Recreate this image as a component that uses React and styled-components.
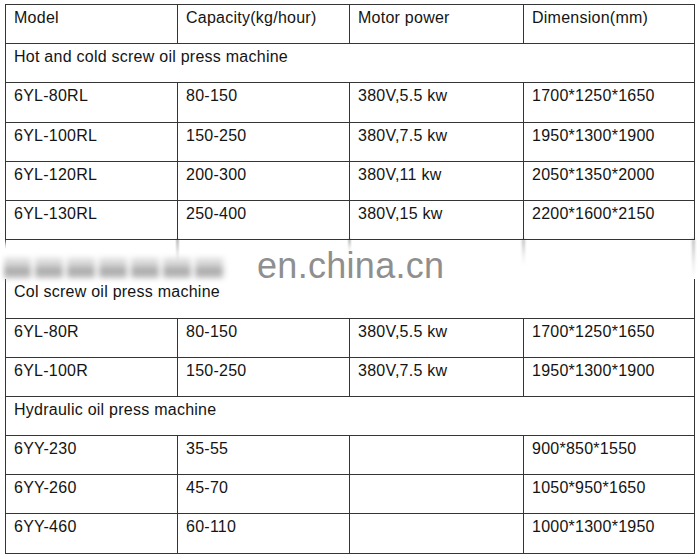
import React from "react";
import styled, { createGlobalStyle } from "styled-components";

const GlobalStyle = createGlobalStyle`
  html, body {
    margin: 0;
    padding: 0;
    background: #fff;
  }
`;

const rows = [
  { section: "Hot and cold screw oil press machine" },
  { cells: ["6YL-80RL", "80-150", "380V,5.5 kw", "1700*1250*1650"] },
  { cells: ["6YL-100RL", "150-250", "380V,7.5 kw", "1950*1300*1900"] },
  { cells: ["6YL-120RL", "200-300", "380V,11 kw", "2050*1350*2000"] },
  { cells: ["6YL-130RL", "250-400", "380V,15 kw", "2200*1600*2150"] },
  { blank: true },
  { section: "Col screw oil press machine" },
  { cells: ["6YL-80R", "80-150", "380V,5.5 kw", "1700*1250*1650"] },
  { cells: ["6YL-100R", "150-250", "380V,7.5 kw", "1950*1300*1900"] },
  { section: "Hydraulic oil press machine" },
  { cells: ["6YY-230", "35-55", "", "900*850*1550"] },
  { cells: ["6YY-260", "45-70", "", "1050*950*1650"] },
  { cells: ["6YY-460", "60-110", "", "1000*1300*1950"] },
];

const Page = styled.div`
  position: relative;
  padding: 4px 0 0 5px;
  width: 700px;
  height: 559px;
  box-sizing: border-box;
  overflow: hidden;
`;

const Table = styled.table`
  border-collapse: collapse;
  table-layout: fixed;
  width: 689px;
  font-family: "Liberation Sans", Arial, sans-serif;
  font-size: 16px;
  letter-spacing: 0.25px;
  color: #141414;
`;

const Row = styled.tr`
  height: 39.2px;
`;

const Cell = styled.td`
  border: 1px solid #353535;
  padding: 4px 8px 0 8px;
  line-height: 18px;
  vertical-align: top;
  white-space: nowrap;
  overflow: hidden;
  box-sizing: border-box;
`;

const BlankCell = styled(Cell)`
  border-bottom-style: hidden;
  border-left-style: ${(p) => (p.$edge === "left" ? "hidden" : "solid")};
  border-right-style: hidden;
`;

const Watermark = styled.div`
  position: absolute;
  left: 0;
  top: 239px;
  width: 700px;
  height: 42px;
  pointer-events: none;
`;

const Smudge = styled.div`
  position: absolute;
  left: 4px;
  top: 18px;
  width: 222px;
  height: 22px;
  background:
    repeating-linear-gradient(
      90deg,
      rgba(255, 255, 255, 0) 0 26px,
      rgba(255, 255, 255, 0.7) 26px 32px
    ),
    linear-gradient(
      180deg,
      rgba(215, 215, 215, 0.5) 0%,
      rgba(190, 190, 190, 0.7) 35%,
      rgba(150, 150, 150, 0.85) 65%,
      rgba(190, 190, 190, 0.6) 100%
    );
  filter: blur(2.5px);
`;

const Brand = styled.div`
  position: absolute;
  left: 257px;
  top: 7px;
  font-family: "Liberation Sans", Arial, sans-serif;
  font-size: 36px;
  line-height: 40px;
  letter-spacing: 0.3px;
  color: #8f8f8f;
`;

const Stub = styled.div`
  position: absolute;
  top: 0;
  left: ${(p) => p.$x}px;
  width: 1px;
  height: ${(p) => p.$h}px;
  background: linear-gradient(180deg, #353535 0%, rgba(120, 120, 120, 0.4) 60%, rgba(200, 200, 200, 0) 100%);
  filter: blur(${(p) => p.$blur}px);
`;

export default function App() {
  return (
    <Page>
      <GlobalStyle />
      <Table>
        <colgroup>
          <col style={{ width: 172 }} />
          <col style={{ width: 172 }} />
          <col style={{ width: 174 }} />
          <col style={{ width: 171 }} />
        </colgroup>
        <tbody>
          <Row>
            <Cell>Model</Cell>
            <Cell>Capacity(kg/hour)</Cell>
            <Cell>Motor power</Cell>
            <Cell>Dimension(mm)</Cell>
          </Row>
          {rows.map((r, i) => {
            if (r.section)
              return (
                <Row key={i}>
                  <Cell colSpan={4}>{r.section}</Cell>
                </Row>
              );
            if (r.blank)
              return (
                <Row key={i}>
                  <BlankCell $edge="left" />
                  <BlankCell />
                  <BlankCell />
                  <BlankCell />
                </Row>
              );
            return (
              <Row key={i}>
                {r.cells.map((c, j) => (
                  <Cell key={j}>{c}</Cell>
                ))}
              </Row>
            );
          })}
        </tbody>
      </Table>
      <Watermark>
        <Stub $x={5} $h={10} $blur={0.5} />
        <Stub $x={177} $h={24} $blur={1.2} />
        <Stub $x={349} $h={14} $blur={0.8} />
        <Stub $x={523} $h={26} $blur={1.5} />
        <Stub $x={693} $h={40} $blur={1.5} />
        <Smudge />
        <Brand>en.china.cn</Brand>
      </Watermark>
    </Page>
  );
}
